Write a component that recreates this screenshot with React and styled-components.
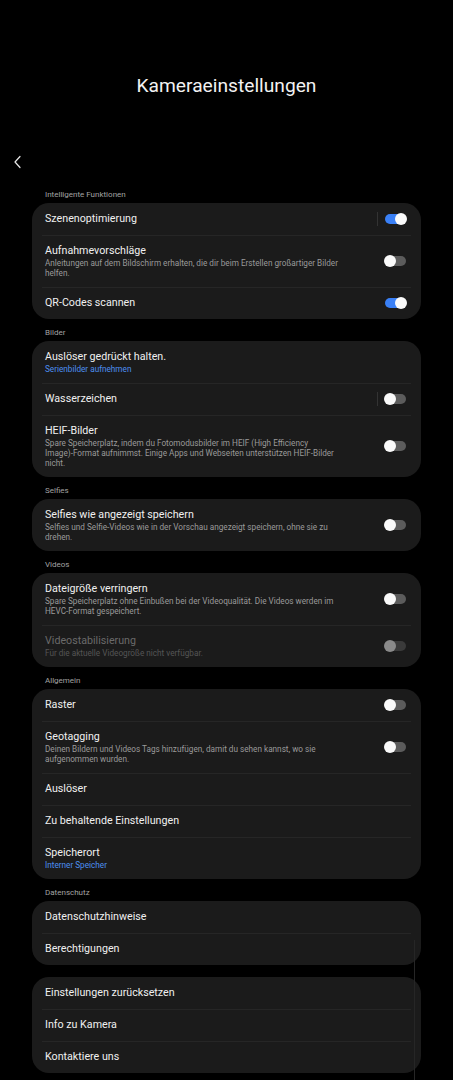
import React from 'react';
import styled, { createGlobalStyle } from 'styled-components';

const Global = createGlobalStyle`
  html, body {
    margin: 0;
    padding: 0;
    background: #000;
  }
  body {
    font-family: Roboto, "Noto Sans", sans-serif;
    -webkit-font-smoothing: antialiased;
  }
`;

const Page = styled.div`
  width: 453px;
  min-height: 1080px;
  background: #000;
  position: relative;
  overflow: hidden;
`;

const Title = styled.h1`
  margin: 0;
  padding-top: 72px;
  height: 28px;
  font-size: 19.2px;
  font-weight: 400;
  line-height: 28px;
  color: #f2f2f2;
  text-align: center;
`;

const BackBar = styled.div`
  height: 24px;
  margin-top: 50px;
  padding-left: 12px;
  display: flex;
  align-items: center;
`;

const Content = styled.div`
  padding: 0 32px;
  display: flex;
  flex-direction: column;
`;

const SectionLabel = styled.div`
  font-size: 8px;
  line-height: 10px;
  color: #a3a3a3;
  padding: ${(p) => (p.first ? '16px' : '9px')} 13px 3px;
`;

const Card = styled.div`
  background: #1b1b1b;
  border-radius: 17px;
  overflow: hidden;
  margin-top: ${(p) => (p.gap ? '12px' : '0')};
`;

const Row = styled.div`
  display: flex;
  align-items: center;
  padding: 9px 13px;
  position: relative;
  & + &::before {
    content: '';
    position: absolute;
    top: 0;
    left: 10px;
    right: 10px;
    height: 1px;
    background: #262626;
  }
`;

const TextCol = styled.div`
  flex: 1;
  min-width: 0;
  padding-right: 20px;
`;

const RowTitle = styled.div`
  font-size: 10.7px;
  line-height: 14px;
  color: ${(p) => (p.disabled ? '#6a6a6a' : '#f0f0f0')};
`;

const SubLine = styled.div`
  font-size: 8.2px;
  line-height: 10px;
  white-space: nowrap;
  color: ${(p) => (p.blue ? '#4d8ff0' : p.disabled ? '#555' : '#9a9a9a')};
`;

const Divider = styled.div`
  width: 1px;
  height: 14px;
  background: #333;
  margin-right: 7px;
`;

const Track = styled.div`
  width: 21px;
  height: 10px;
  border-radius: 5px;
  background: ${(p) => (p.on ? '#3a80f6' : p.disabled ? '#3a3a3a' : '#5c5c5c')};
  position: relative;
  margin-right: 2px;
`;

const Knob = styled.div`
  position: absolute;
  top: -1px;
  ${(p) => (p.on ? 'right: -1px;' : 'left: -1px;')}
  width: 12px;
  height: 12px;
  border-radius: 50%;
  background: ${(p) => (p.disabled ? '#8a8a8a' : '#fafafa')};
`;

const Scrollbar = styled.div`
  position: absolute;
  left: 414px;
  top: 940px;
  width: 1px;
  height: 140px;
  background: #262626;
`;

function Toggle({ on, disabled, sep }) {
  return (
    <>
      {sep && <Divider />}
      <Track on={on} disabled={disabled}>
        <Knob on={on} disabled={disabled} />
      </Track>
    </>
  );
}

function Item({ title, sub = [], blue, toggle, on, sep, disabled }) {
  return (
    <Row>
      <TextCol>
        <RowTitle disabled={disabled}>{title}</RowTitle>
        {sub.map((line) => (
          <SubLine key={line} blue={blue} disabled={disabled}>
            {line}
          </SubLine>
        ))}
      </TextCol>
      {toggle && <Toggle on={on} disabled={disabled} sep={sep} />}
    </Row>
  );
}

export default function App() {
  return (
    <Page>
      <Global />
      <Title>Kameraeinstellungen</Title>
      <BackBar>
        <svg width="12" height="14" viewBox="0 0 12 14" fill="none">
          <path d="M8 1.5 L3 7 L8 12.5" stroke="#e8e8e8" strokeWidth="1.2" strokeLinecap="round" strokeLinejoin="round" />
        </svg>
      </BackBar>
      <Content>
        <SectionLabel first>Intelligente Funktionen</SectionLabel>
        <Card>
          <Item title="Szenenoptimierung" toggle on sep />
          <Item
            title="Aufnahmevorschläge"
            sub={['Anleitungen auf dem Bildschirm erhalten, die dir beim Erstellen großartiger Bilder', 'helfen.']}
            toggle
          />
          <Item title="QR-Codes scannen" toggle on />
        </Card>

        <SectionLabel>Bilder</SectionLabel>
        <Card>
          <Item title="Auslöser gedrückt halten." sub={['Serienbilder aufnehmen']} blue />
          <Item title="Wasserzeichen" toggle sep />
          <Item
            title="HEIF-Bilder"
            sub={[
              'Spare Speicherplatz, indem du Fotomodusbilder im HEIF (High Efficiency',
              'Image)-Format aufnimmst. Einige Apps und Webseiten unterstützen HEIF-Bilder',
              'nicht.',
            ]}
            toggle
          />
        </Card>

        <SectionLabel>Selfies</SectionLabel>
        <Card>
          <Item
            title="Selfies wie angezeigt speichern"
            sub={['Selfies und Selfie-Videos wie in der Vorschau angezeigt speichern, ohne sie zu', 'drehen.']}
            toggle
          />
        </Card>

        <SectionLabel>Videos</SectionLabel>
        <Card>
          <Item
            title="Dateigröße verringern"
            sub={[
              'Spare Speicherplatz ohne Einbußen bei der Videoqualität. Die Videos werden im',
              'HEVC-Format gespeichert.',
            ]}
            toggle
          />
          <Item
            title="Videostabilisierung"
            sub={['Für die aktuelle Videogröße nicht verfügbar.']}
            toggle
            disabled
          />
        </Card>

        <SectionLabel>Allgemein</SectionLabel>
        <Card>
          <Item title="Raster" toggle />
          <Item
            title="Geotagging"
            sub={['Deinen Bildern und Videos Tags hinzufügen, damit du sehen kannst, wo sie', 'aufgenommen wurden.']}
            toggle
          />
          <Item title="Auslöser" />
          <Item title="Zu behaltende Einstellungen" />
          <Item title="Speicherort" sub={['Interner Speicher']} blue />
        </Card>

        <SectionLabel>Datenschutz</SectionLabel>
        <Card>
          <Item title="Datenschutzhinweise" />
          <Item title="Berechtigungen" />
        </Card>

        <Card gap>
          <Item title="Einstellungen zurücksetzen" />
          <Item title="Info zu Kamera" />
          <Item title="Kontaktiere uns" />
        </Card>
      </Content>
      <Scrollbar />
    </Page>
  );
}
